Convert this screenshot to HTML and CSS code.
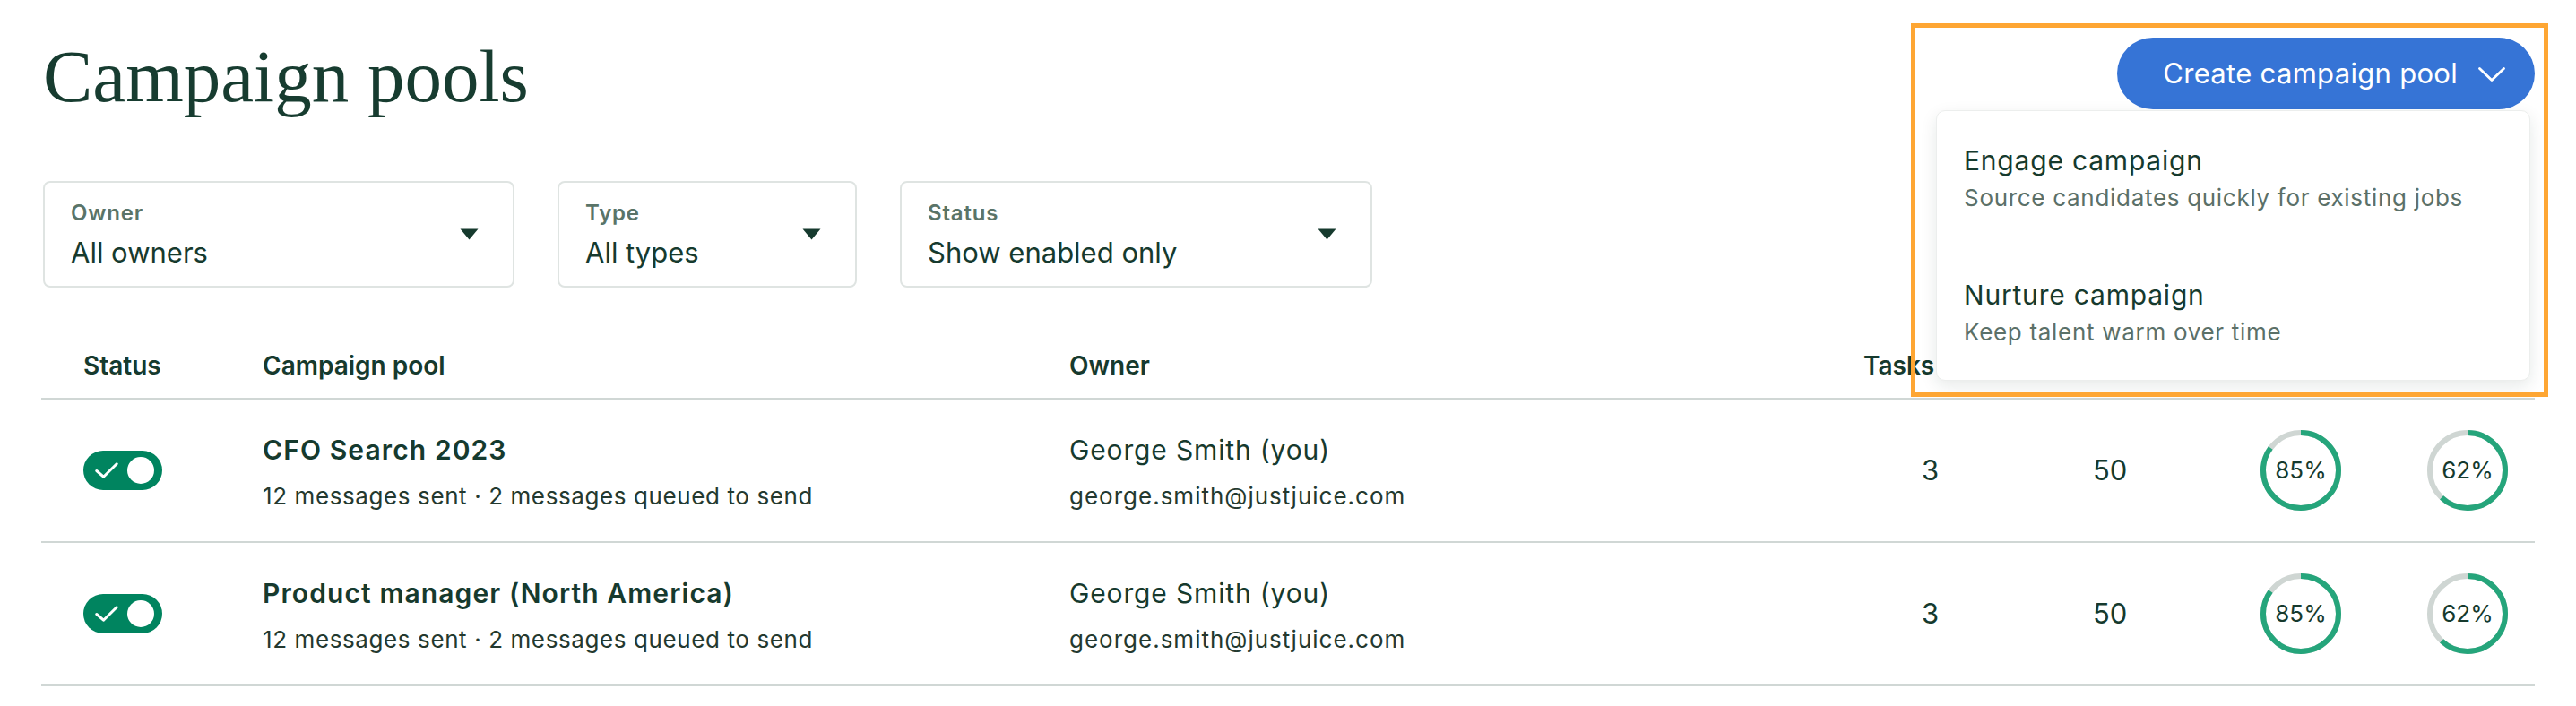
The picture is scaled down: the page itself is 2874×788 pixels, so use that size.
FILE: index.html
```html
<!DOCTYPE html>
<html lang="en">
<head>
<meta charset="utf-8">
<title>Campaign pools</title>
<link rel="stylesheet" href="styles.css">
</head>
<body>
<div class="page">
  <header class="page-header">
    <h1 class="title">Campaign pools</h1>
    <div class="create">
      <button class="create-btn" type="button">
        <span>Create campaign pool</span>
        <svg class="chev" width="30" height="16" viewBox="0 0 30 16"><path d="M1.5 1.5 L15 14.5 L28.5 1.5" fill="none" stroke="#fff" stroke-width="2.8" stroke-linecap="round" stroke-linejoin="round"/></svg>
      </button>
      <div class="menu">
        <div class="menu-item">
          <div class="menu-title">Engage campaign</div>
          <div class="menu-desc">Source candidates quickly for existing jobs</div>
        </div>
        <div class="menu-item">
          <div class="menu-title">Nurture campaign</div>
          <div class="menu-desc">Keep talent warm over time</div>
        </div>
      </div>
    </div>
  </header>

  <div class="filters">
    <div class="select select-owner">
      <div class="select-text">
        <div class="select-label">Owner</div>
        <div class="select-value">All owners</div>
      </div>
      <svg class="caret" width="21" height="13" viewBox="0 0 21 13"><path d="M0.5 0.5 H20.5 L10.5 12.5 Z" fill="#163a2e"/></svg>
    </div>
    <div class="select select-type">
      <div class="select-text">
        <div class="select-label">Type</div>
        <div class="select-value">All types</div>
      </div>
      <svg class="caret" width="21" height="13" viewBox="0 0 21 13"><path d="M0.5 0.5 H20.5 L10.5 12.5 Z" fill="#163a2e"/></svg>
    </div>
    <div class="select select-status">
      <div class="select-text">
        <div class="select-label">Status</div>
        <div class="select-value">Show enabled only</div>
      </div>
      <svg class="caret" width="21" height="13" viewBox="0 0 21 13"><path d="M0.5 0.5 H20.5 L10.5 12.5 Z" fill="#163a2e"/></svg>
    </div>
  </div>

  <div class="table">
    <div class="row head">
      <div class="cell c-status">Status</div>
      <div class="cell">Campaign pool</div>
      <div class="cell">Owner</div>
      <div class="cell">Tasks</div>
      <div class="cell">Candidates</div>
      <div class="cell">Open rate</div>
      <div class="cell">Replies</div>
    </div>

    <div class="row body">
      <div class="cell c-status">
        <span class="toggle"><svg class="check" width="26" height="18" viewBox="0 0 26 18"><path d="M1.8 9.5 L9.5 16.2 L24.2 1.8" fill="none" stroke="#fff" stroke-width="3" stroke-linecap="round" stroke-linejoin="round"/></svg><span class="knob"></span></span>
      </div>
      <div class="cell stack">
        <div class="pool-name">CFO Search 2023</div>
        <div class="sub">12 messages sent · 2 messages queued to send</div>
      </div>
      <div class="cell stack">
        <div class="owner-name">George Smith (you)</div>
        <div class="sub email">george.smith@justjuice.com</div>
      </div>
      <div class="cell num c-tasks">3</div>
      <div class="cell num c-cands">50</div>
      <div class="cell c-open">
        <div class="ring">
          <svg width="90" height="90" viewBox="0 0 90 90"><circle cx="45" cy="45" r="42" fill="none" stroke="#cfd6d3" stroke-width="6"/><circle cx="45" cy="45" r="42" fill="none" stroke="#25a57b" stroke-width="6" stroke-dasharray="224.3 263.9" transform="rotate(-90 45 45)"/></svg>
          <span class="ring-label">85%</span>
        </div>
      </div>
      <div class="cell c-reply">
        <div class="ring">
          <svg width="90" height="90" viewBox="0 0 90 90"><circle cx="45" cy="45" r="42" fill="none" stroke="#cfd6d3" stroke-width="6"/><circle cx="45" cy="45" r="42" fill="none" stroke="#25a57b" stroke-width="6" stroke-dasharray="163.6 263.9" transform="rotate(-90 45 45)"/></svg>
          <span class="ring-label">62%</span>
        </div>
      </div>
    </div>

    <div class="row body">
      <div class="cell c-status">
        <span class="toggle"><svg class="check" width="26" height="18" viewBox="0 0 26 18"><path d="M1.8 9.5 L9.5 16.2 L24.2 1.8" fill="none" stroke="#fff" stroke-width="3" stroke-linecap="round" stroke-linejoin="round"/></svg><span class="knob"></span></span>
      </div>
      <div class="cell stack">
        <div class="pool-name">Product manager (North America)</div>
        <div class="sub">12 messages sent · 2 messages queued to send</div>
      </div>
      <div class="cell stack">
        <div class="owner-name">George Smith (you)</div>
        <div class="sub email">george.smith@justjuice.com</div>
      </div>
      <div class="cell num c-tasks">3</div>
      <div class="cell num c-cands">50</div>
      <div class="cell c-open">
        <div class="ring">
          <svg width="90" height="90" viewBox="0 0 90 90"><circle cx="45" cy="45" r="42" fill="none" stroke="#cfd6d3" stroke-width="6"/><circle cx="45" cy="45" r="42" fill="none" stroke="#25a57b" stroke-width="6" stroke-dasharray="224.3 263.9" transform="rotate(-90 45 45)"/></svg>
          <span class="ring-label">85%</span>
        </div>
      </div>
      <div class="cell c-reply">
        <div class="ring">
          <svg width="90" height="90" viewBox="0 0 90 90"><circle cx="45" cy="45" r="42" fill="none" stroke="#cfd6d3" stroke-width="6"/><circle cx="45" cy="45" r="42" fill="none" stroke="#25a57b" stroke-width="6" stroke-dasharray="163.6 263.9" transform="rotate(-90 45 45)"/></svg>
          <span class="ring-label">62%</span>
        </div>
      </div>
    </div>
  </div>

  <div class="highlight"></div>
</div>
</body>
</html>
```

FILE: styles.css
```css
* { box-sizing: border-box; }

html, body {
  margin: 0;
  background: #ffffff;
}

body {
  font-family: Inter, "Noto Sans", sans-serif;
  color: #163a2e;
}

.page {
  position: relative;
  width: 2874px;
  height: 788px;
  padding: 40px 46px 0 48px;
  overflow: hidden;
}

/* Header */
.page-header {
  display: flex;
  justify-content: space-between;
  align-items: flex-start;
}

.title {
  margin: 0;
  font-family: "Liberation Serif", "Times New Roman", serif;
  font-weight: 400;
  font-size: 83px;
  line-height: 90px;
  color: #173c30;
}

.create {
  position: relative;
  margin-top: 2px;
}

.create-btn {
  display: flex;
  align-items: center;
  gap: 23px;
  height: 80px;
  padding: 0 33px 0 51px;
  border: 0;
  border-radius: 40px;
  background: #3674d6;
  color: #ffffff;
  font-family: Inter, "Noto Sans", sans-serif;
  font-weight: 400;
  font-size: 31px;
  line-height: 40px;
  letter-spacing: 0.3px;
}

.chev { display: block; margin-top: 2px; }

.menu {
  position: absolute;
  top: 81px;
  right: 5px;
  width: 663px;
  background: #ffffff;
  border: 1px solid #eceeed;
  border-radius: 10px;
  box-shadow: 0 6px 18px rgba(20, 45, 35, 0.10);
  z-index: 2;
}

.menu-item {
  padding: 33px 30px;
}

.menu-title {
  font-size: 30px;
  line-height: 44px;
  letter-spacing: 0.8px;
  color: #163a2e;
}

.menu-desc {
  font-size: 26px;
  line-height: 40px;
  letter-spacing: 0.7px;
  color: #5b7068;
}

/* Filters */
.filters {
  display: flex;
  gap: 48px;
  margin-top: 72px;
}

.select {
  display: flex;
  align-items: center;
  justify-content: space-between;
  height: 119px;
  padding: 0 38px 0 29px;
  border: 2px solid #dfe4e2;
  border-radius: 8px;
}

.select-owner { width: 526px; }
.select-type { width: 334px; }
.select-status { width: 527px; }

.select-text { margin-top: 2px; }

.select-label {
  font-size: 24px;
  font-weight: 600;
  line-height: 30px;
  letter-spacing: 0.8px;
  color: #5a7468;
}

.select-value {
  margin-top: 9px;
  font-size: 31px;
  line-height: 40px;
  color: #163a2e;
}

.caret { display: block; }

/* Table */
.table {
  margin: 51px 0 0 -2px;
}

.row {
  display: grid;
  grid-template-columns: 247px 900px 886px 191px 170px 250px 138px;
  border-bottom: 2px solid #d0d7d5;
}

.head .cell {
  padding-top: 18px;
  padding-bottom: 18px;
  font-size: 28px;
  font-weight: 600;
  line-height: 36px;
  color: #163a2e;
  white-space: nowrap;
}

.row .c-status { padding-left: 47px; }

.row.body {
  height: 160px;
  align-items: center;
}

.stack { padding-top: 4px; }

.pool-name {
  font-size: 30px;
  font-weight: 600;
  line-height: 40px;
  letter-spacing: 1.1px;
  color: #163a2e;
}

.owner-name {
  font-size: 30px;
  font-weight: 400;
  line-height: 40px;
  letter-spacing: 0.85px;
  color: #163a2e;
}

.sub {
  margin-top: 14px;
  font-size: 26px;
  line-height: 36px;
  letter-spacing: 0.6px;
  color: #24392f;
}

.sub.email { letter-spacing: 1px; }

.num {
  font-size: 31px;
  line-height: 40px;
  color: #163a2e;
}

.c-tasks { padding-left: 65px; }
.c-cands { padding-left: 65px; }
.c-open { padding-left: 82px; }
.c-reply { padding-left: 18px; }

/* Toggle */
.toggle {
  display: flex;
  align-items: center;
  justify-content: space-between;
  width: 88px;
  height: 44px;
  padding: 0 9px 0 13px;
  border-radius: 22px;
  background: #00845f;
}

.check { display: block; }

.knob {
  width: 30px;
  height: 30px;
  border-radius: 50%;
  background: #ffffff;
}

/* Ring */
.ring {
  display: grid;
  place-items: center;
  width: 90px;
  height: 90px;
}

.ring > * { grid-area: 1 / 1; }

.ring svg { display: block; }

.ring-label {
  font-size: 26px;
  line-height: 30px;
  color: #163a2e;
}

/* Annotation overlay */
.highlight {
  position: absolute;
  left: 2132px;
  top: 26px;
  width: 711px;
  height: 417px;
  border: 5px solid #fea633;
  pointer-events: none;
  z-index: 3;
}
```
